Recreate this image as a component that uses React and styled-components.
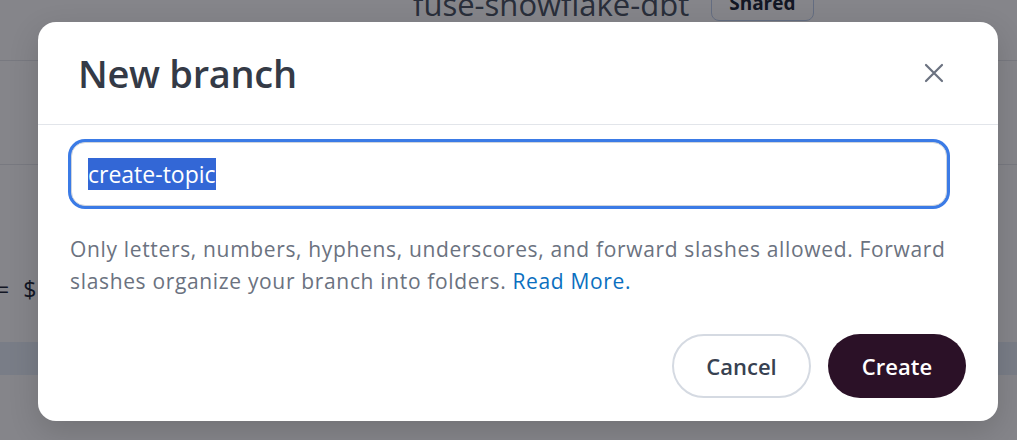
import React, { useEffect, useRef } from 'react'
import styled, { createGlobalStyle } from 'styled-components'

const GlobalStyle = createGlobalStyle`
  html, body {
    margin: 0;
    padding: 0;
    width: 1017px;
    height: 440px;
    overflow: hidden;
    background: #ffffff;
    font-family: 'Open Sans', 'Noto Sans', sans-serif;
  }
  * {
    box-sizing: border-box;
  }
`

const Page = styled.div`
  position: relative;
  width: 1017px;
  height: 440px;
  overflow: hidden;
  background: #ffffff;
`

const PageHeader = styled.div`
  height: 61px;
  border-bottom: 1px solid #e5e7eb;
  display: flex;
  align-items: flex-start;
  gap: 22px;
  padding-left: 413px;
`

const PageTitle = styled.div`
  margin-top: -16px;
  font-size: 31px;
  line-height: 40px;
  color: #4b5563;
`

const Badge = styled.div`
  margin-top: -19px;
  height: 40px;
  padding: 9px 17px 0;
  border: 1.5px solid #bfd0ee;
  border-radius: 8px;
  font-size: 19px;
  line-height: 24px;
  font-weight: 700;
  color: #1f2937;
`

const Toolbar = styled.div`
  height: 104px;
  border-bottom: 1px solid #e5e7eb;
`

const Formula = styled.div`
  padding-top: 109px;
  height: 177px;
  font-size: 23px;
  line-height: 31px;
  color: #1f2937;
  word-spacing: 8px;
  margin-left: -4px;
`

const Band = styled.div`
  height: 33px;
  background: #e7f0fa;
`

const Backdrop = styled.div`
  position: absolute;
  inset: 0;
  background: rgba(6, 7, 17, 0.49);
  padding: 22px 0 0 38px;
`

const Modal = styled.div`
  width: 960px;
  height: 399px;
  background: #ffffff;
  border-radius: 18px;
  display: flex;
  flex-direction: column;
  box-shadow: 0 10px 30px rgba(0, 0, 0, 0.15);
`

const Header = styled.div`
  height: 103px;
  flex: none;
  display: flex;
  align-items: center;
  justify-content: space-between;
  padding: 0 54px 0 40px;
  border-bottom: 1px solid #e2e5ea;
`

const Title = styled.h2`
  margin: 0;
  font-size: 38px;
  font-weight: 600;
  color: #343a46;
  letter-spacing: -0.3px;
`

const CloseButton = styled.button`
  width: 20px;
  height: 20px;
  padding: 0;
  border: 0;
  background: none;
  color: #6b7280;
  display: flex;
  align-items: center;
  justify-content: center;
  cursor: pointer;
`

const Body = styled.div`
  flex: 1;
  display: flex;
  flex-direction: column;
  padding: 14px 48px 23px 30px;
`

const Field = styled.input`
  width: calc(100% - 6px);
  height: 64px;
  margin: 3px 3px 0;
  border: 1.5px solid #cfd4dc;
  border-radius: 14px;
  box-shadow: 0 0 0 3px #3b7be6;
  padding: 0 16px;
  font-family: inherit;
  font-size: 23px;
  color: #111827;
  outline: none;
  background: #ffffff;

  &::selection {
    background: #3367d6;
    color: #ffffff;
  }
`

const Help = styled.p`
  margin: 27px 0 0 2px;
  font-size: 21px;
  line-height: 32px;
  letter-spacing: 0.66px;
  color: #6b7280;
`

const Link = styled.a`
  color: #0b6fc0;
  text-decoration: none;
`

const Actions = styled.div`
  margin-top: auto;
  display: flex;
  justify-content: flex-end;
  gap: 17px;
  margin-right: -16px;
`

const Button = styled.button`
  height: 64px;
  width: ${(p) => (p.primary ? '138px' : '139px')};
  border-radius: 32px;
  font-family: inherit;
  font-size: 22px;
  font-weight: 600;
  cursor: pointer;
  border: ${(p) => (p.primary ? '0' : '2px solid #d5dae2')};
  background: ${(p) => (p.primary ? '#2b1127' : '#ffffff')};
  color: ${(p) => (p.primary ? '#ffffff' : '#374151')};
`

const CloseIcon = () => (
  <svg width='20' height='20' viewBox='0 0 20 20' fill='none'>
    <path d='M2 2 L18 18 M18 2 L2 18' stroke='currentColor' strokeWidth='2.2' strokeLinecap='round' />
  </svg>
)

export default function App() {
  const inputRef = useRef(null)

  useEffect(() => {
    if (inputRef.current) {
      inputRef.current.focus()
      inputRef.current.select()
    }
  }, [])

  return (
    <>
      <GlobalStyle />
      <Page>
        <PageHeader>
          <PageTitle>fuse-snowflake-dbt</PageTitle>
          <Badge>Shared</Badge>
        </PageHeader>
        <Toolbar />
        <Formula>= $</Formula>
        <Band />
        <Backdrop>
          <Modal role='dialog' aria-labelledby='new-branch-title'>
            <Header>
              <Title id='new-branch-title'>New branch</Title>
              <CloseButton aria-label='Close'>
                <CloseIcon />
              </CloseButton>
            </Header>
            <Body>
              <Field ref={inputRef} defaultValue='create-topic' spellCheck={false} />
              <Help>
                Only letters, numbers, hyphens, underscores, and forward slashes allowed. Forward
                slashes organize your branch into folders. <Link href='#'>Read More.</Link>
              </Help>
              <Actions>
                <Button>Cancel</Button>
                <Button primary>Create</Button>
              </Actions>
            </Body>
          </Modal>
        </Backdrop>
      </Page>
    </>
  )
}
